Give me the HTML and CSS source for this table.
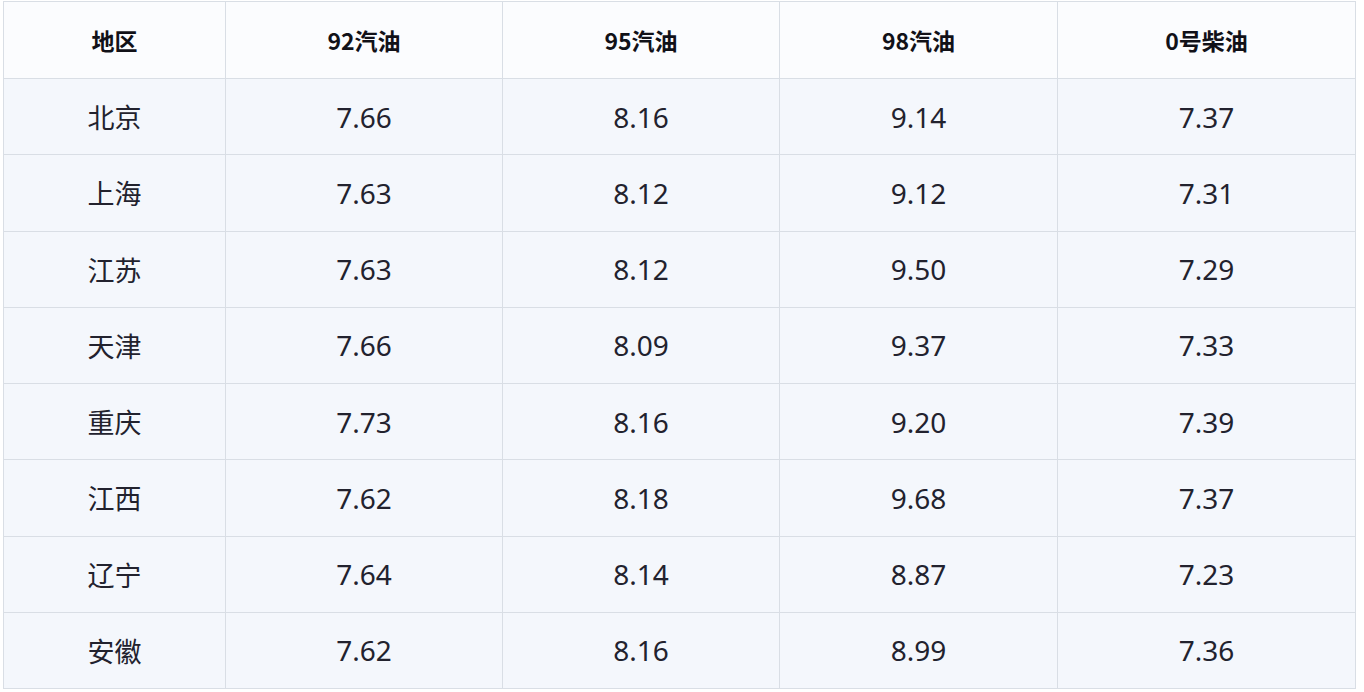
FILE: index.html
```html
<!DOCTYPE html>
<html lang="zh-CN">
<head>
<meta charset="utf-8">
<title>油价</title>
<link rel="stylesheet" href="styles.css">
</head>
<body>
<div class="wrap">
<table class="price">
<colgroup>
<col class="c1"><col class="c2"><col class="c3"><col class="c4"><col class="c5">
</colgroup>
<thead>
<tr><th>地区</th><th>92汽油</th><th>95汽油</th><th>98汽油</th><th>0号柴油</th></tr>
</thead>
<tbody>
<tr><td class="name">北京</td><td>7.66</td><td>8.16</td><td>9.14</td><td>7.37</td></tr>
<tr><td class="name">上海</td><td>7.63</td><td>8.12</td><td>9.12</td><td>7.31</td></tr>
<tr><td class="name">江苏</td><td>7.63</td><td>8.12</td><td>9.50</td><td>7.29</td></tr>
<tr><td class="name">天津</td><td>7.66</td><td>8.09</td><td>9.37</td><td>7.33</td></tr>
<tr><td class="name">重庆</td><td>7.73</td><td>8.16</td><td>9.20</td><td>7.39</td></tr>
<tr><td class="name">江西</td><td>7.62</td><td>8.18</td><td>9.68</td><td>7.37</td></tr>
<tr><td class="name">辽宁</td><td>7.64</td><td>8.14</td><td>8.87</td><td>7.23</td></tr>
<tr><td class="name">安徽</td><td>7.62</td><td>8.16</td><td>8.99</td><td>7.36</td></tr>
</tbody>
</table>
</div>
</body>
</html>
```
FILE: styles.css
```css
html, body {
  margin: 0;
  padding: 0;
  background: #ffffff;
}
body {
  font-family: "Noto Sans", "Noto Sans CJK SC", sans-serif;
  color: #1c1c28;
}
.wrap {
  padding: 1px 0 0 3px;
}
.price {
  border-collapse: collapse;
  table-layout: fixed;
  width: 1352px;
}
.c1 { width: 222px; }
.c2 { width: 277px; }
.c3 { width: 277px; }
.c4 { width: 278px; }
.c5 { width: 298px; }
.price th,
.price td {
  border: 1px solid #d9dee5;
  text-align: center;
  vertical-align: middle;
  padding: 0;
}
.price th {
  height: 76px;
  background: #fbfcfe;
  font-family: "Noto Sans CJK SC", sans-serif;
  font-weight: 700;
  font-size: 23px;
  color: #111118;
}
.price td {
  height: 75.25px;
  background: #f4f7fc;
  font-size: 28px;
  font-weight: 400;
  color: #22222e;
}
.price td.name {
  font-family: "Noto Sans CJK SC", sans-serif;
  font-size: 27px;
}
```
